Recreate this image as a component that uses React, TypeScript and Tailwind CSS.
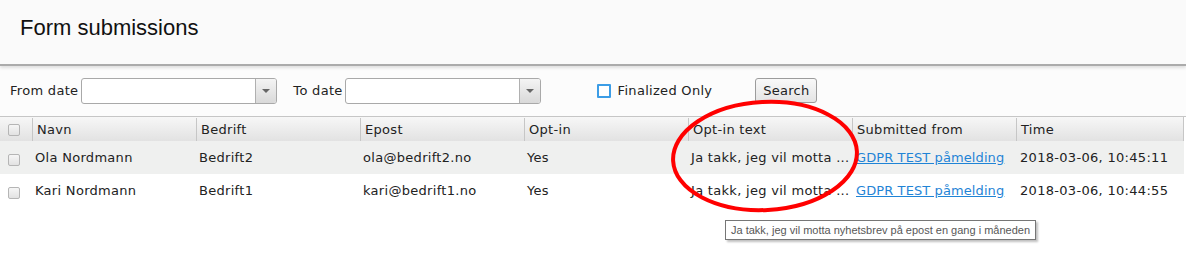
const cols = ["Navn", "Bedrift", "Epost", "Opt-in", "Opt-in text", "Submitted from", "Time"]

type Row = {
  name: string
  company: string
  email: string
  optIn: string
  optInText: string
  source: string
  time: string
}

const rows: Row[] = [
  {
    name: "Ola Nordmann",
    company: "Bedrift2",
    email: "ola@bedrift2.no",
    optIn: "Yes",
    optInText: "Ja takk, jeg vil motta ...",
    source: "GDPR TEST påmelding",
    time: "2018-03-06, 10:45:11",
  },
  {
    name: "Kari Nordmann",
    company: "Bedrift1",
    email: "kari@bedrift1.no",
    optIn: "Yes",
    optInText: "Ja takk, jeg vil motta ...",
    source: "GDPR TEST påmelding",
    time: "2018-03-06, 10:44:55",
  },
]

const Box = () => (
  <span className="block w-[12px] h-[12px] rounded-[2px] border border-[#b5b5b5] bg-gradient-to-b from-[#f6f6f6] to-[#e2e2e2]" />
)

const DateInput = () => (
  <div className="flex h-[26px] w-[196px] rounded-[3px] border border-[#a9a9a9] bg-white overflow-hidden">
    <div className="flex-1" />
    <div className="w-[21px] flex items-center justify-center border-l border-[#b0b0b0] bg-gradient-to-b from-[#f4f4f4] to-[#d9d9d9]">
      <svg width="8" height="4" viewBox="0 0 8 4">
        <path d="M0 0 L8 0 L4 4 Z" fill="#666" />
      </svg>
    </div>
  </div>
)

export default function App() {
  return (
    <div className="relative w-[1186px] h-[262px] bg-white overflow-hidden font-['DejaVu_Sans',sans-serif] text-[13px] tracking-[0.3px] text-[#222]">
      <div className="h-[66px] bg-[#fafafa] border-b-2 border-[#ababab] shadow-[0_2px_3px_rgba(0,0,0,0.12)] pl-[20px] pt-[14px] relative z-10">
        <h1 className="font-['Liberation_Sans',Arial,sans-serif] text-[22px] leading-[28px] tracking-normal text-[#111]">Form submissions</h1>
      </div>

      <div className="h-[51px] bg-[#fcfcfc] flex items-center pl-[10px] pb-[1px] border-b border-[#c6c6c6]">
        <span className="mr-[3px]">From date</span>
        <DateInput />
        <span className="ml-[16px] mr-[2px]">To date</span>
        <DateInput />
        <span className="ml-[56px] w-[14px] h-[14px] border-2 border-[#3c9de6] rounded-[1px] bg-white" />
        <span className="ml-[7px]">Finalized Only</span>
        <button className="ml-[43px] h-[25px] w-[62px] rounded-[3px] border border-[#9c9c9c] bg-gradient-to-b from-[#f9f9f9] to-[#e4e4e4] text-[#222]">
          Search
        </button>
      </div>

      <div className="w-[1184px]">
        <div className="grid grid-cols-[32px_repeat(7,164px)] h-[24px] pt-[1px] bg-gradient-to-b from-[#f7f7f7] to-[#e2e2e2] border-r border-[#c6c6c6]">
          <div className="flex items-center pl-[8px]">
            <Box />
          </div>
          {cols.map((c) => (
            <div key={c} className="flex items-center pl-[4px] border-l border-[#c6c6c6]">
              {c}
            </div>
          ))}
        </div>
        {rows.map((r, i) => (
          <div
            key={r.name}
            className={`grid grid-cols-[32px_repeat(7,164px)] h-[33px] items-center pt-[1px] ${i === 0 ? "bg-[#eff0ef]" : "bg-white"}`}
          >
            <div className="pl-[8px] pt-[3px]">
              <Box />
            </div>
            <div className="pl-[3px]">{r.name}</div>
            <div className="pl-[3px]">{r.company}</div>
            <div className="pl-[3px]">{r.email}</div>
            <div className="pl-[3px]">{r.optIn}</div>
            <div className="pl-[3px] whitespace-nowrap">{r.optInText}</div>
            <div className="pl-[4px]">
              <a className="text-[#1f84d6] underline tracking-[0.1px]">{r.source}</a>
            </div>
            <div className="pl-[4px] whitespace-nowrap">{r.time}</div>
          </div>
        ))}
      </div>

      <svg className="absolute left-[668px] top-[98px]" width="196" height="118" viewBox="0 0 196 118">
        <ellipse cx="97" cy="58" rx="92" ry="54" fill="none" stroke="#f00" strokeWidth="4" transform="rotate(-3 97 58)" />
      </svg>

      <div className="absolute left-[725px] top-[220px] h-[20px] px-[5px] flex items-center border border-[#767676] bg-white shadow-[2px_2px_2px_rgba(0,0,0,0.25)] font-['Liberation_Sans',Arial,sans-serif] text-[11px] tracking-normal text-[#575757] whitespace-nowrap">
        Ja takk, jeg vil motta nyhetsbrev på epost en gang i måneden
      </div>
    </div>
  )
}
